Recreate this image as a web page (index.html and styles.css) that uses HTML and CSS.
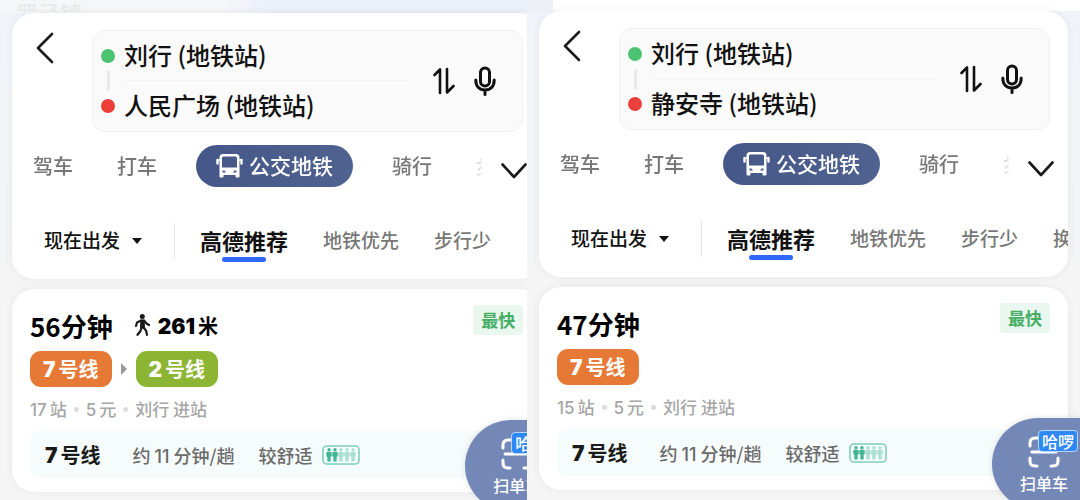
FILE: index.html
```html
<!DOCTYPE html>
<html lang="zh-CN">
<head>
    <meta charset="UTF-8">
    <meta name="viewport" content="width=device-width, initial-scale=1.0">
    <title>公交地铁路线</title>
    <link rel="stylesheet" href="styles.css">
</head>
<body>
    <!-- Iconos compartidos -->
    <svg class="sprite" aria-hidden="true">
        <symbol id="back" viewBox="0 0 18 32">
            <path d="M16 2 2 16 16 30" fill="none" stroke="currentColor" stroke-width="2.6" stroke-linecap="round" stroke-linejoin="round"/>
        </symbol>
        <symbol id="swap" viewBox="0 0 22 28">
            <path d="M1.5 8 7 2.500V26M14 2V25.5L20.5 19" fill="none" stroke="currentColor" stroke-width="2.6" stroke-linecap="round" stroke-linejoin="round"/>
        </symbol>
        <symbol id="mic" viewBox="0 0 22 30">
            <rect x="6.500" y="2" width="9" height="18" rx="4.500" fill="none" stroke="currentColor" stroke-width="3"/>
            <path d="M1.800 14C1.800 20.500 5.500 24 11 24S20.200 20.500 20.200 14M11 24V28.500" fill="none" stroke="currentColor" stroke-width="3" stroke-linecap="round"/>
        </symbol>
        <symbol id="bus" viewBox="0 0 27 25">
            <path fill="currentColor" fill-rule="evenodd" d="M7 1H20Q23.500 1 23.500 4.500V22V23.500Q23.500 24.500 22.500 24.500H20.500Q19.500 24.500 19.500 23.500V22H7.500V23.500Q7.500 24.500 6.500 24.500H4.500Q3.500 24.500 3.500 23.500V4.500Q3.500 1 7 1ZM7.500 3.500Q6 3.500 6 5V14.500H21V5Q21 3.500 19.500 3.500ZM6.500 17.500V19.500H10L8.500 17.500ZM20.500 17.500V19.500H17L18.500 17.500Z"/>
            <path d="M1.500 7V10.500M25.500 7V10.500" stroke="currentColor" stroke-width="2.400" stroke-linecap="round"/>
            <path d="M1.500 7H4M23 7H25.500" stroke="currentColor" stroke-width="1.600"/>
        </symbol>
        <symbol id="down" viewBox="0 0 26 16">
            <path d="M1.500 1.500 13 14 24.500 1.500" fill="none" stroke="currentColor" stroke-width="2.600" stroke-linecap="round" stroke-linejoin="round"/>
        </symbol>
        <symbol id="walk" viewBox="0 0 15 22">
            <circle cx="7.300" cy="2.600" r="2.500" fill="currentColor"/>
            <path d="M6 6H9L9.500 14H5.500Z" fill="currentColor" stroke="currentColor" stroke-linejoin="round"/>
            <path d="M6 6.500 2 8.500 1 12M9 6.500 11.500 9.500 14 11M6.500 13.500 5.500 17 2.500 20.800M8.500 13.500 11 16.500 12 20.800" fill="none" stroke="currentColor" stroke-width="2.200" stroke-linecap="round" stroke-linejoin="round"/>
        </symbol>
        <symbol id="person" viewBox="0 0 6 14">
            <circle cx="3" cy="1.800" r="1.700" fill="currentColor"/>
            <path d="M1.300 3.800H4.700Q5.700 3.800 5.700 5V8.500H4.700V13.500H1.300V8.500H.3V5Q.3 3.800 1.300 3.800Z" fill="currentColor"/>
        </symbol>
        <symbol id="crowd" viewBox="0 0 38 20">
            <rect x="1" y="1" width="36" height="18" rx="4" fill="#f7fffc" stroke="#7fd0b8" stroke-width="1.600"/>
            <g color="#43b593">
                <use href="#person" x="4" y="3" width="6" height="14"/>
                <use href="#person" x="10" y="3" width="6" height="14"/>
            </g>
            <g color="#a9e0cf">
                <use href="#person" x="16" y="3" width="6" height="14"/>
                <use href="#person" x="22" y="3" width="6" height="14"/>
                <use href="#person" x="28" y="3" width="6" height="14"/>
            </g>
        </symbol>
        <symbol id="scan" viewBox="0 0 32 32">
            <path d="M2 10V7Q2 2 7 2H10M22 2H25Q30 2 30 7V10M2 22V25Q2 30 7 30H9M30 22V25Q30 30 25 30H23M4 16H28" fill="none" stroke="currentColor" stroke-width="3" stroke-linecap="round"/>
        </symbol>
    </svg>

    <main class="compare">
        <section class="pane">
            <div class="phone phone-wide">
                <div class="map-strip"><span>罗泾镇</span></div>

                <header class="card search">
                    <div class="search-top">
                        <button class="icon-btn back" aria-label="返回"><svg width="18" height="32"><use href="#back"/></svg></button>
                        <div class="route-box">
                            <div class="dots"><i class="dot start"></i><i class="link"></i><i class="dot end"></i></div>
                            <div class="fields">
                                <input type="text" aria-label="起点" value="刘行 (地铁站)">
                                <input type="text" aria-label="终点" value="人民广场 (地铁站)">
                            </div>
                            <button class="icon-btn" aria-label="交换起终点"><svg width="22" height="28"><use href="#swap"/></svg></button>
                            <button class="icon-btn" aria-label="语音输入"><svg width="22" height="30"><use href="#mic"/></svg></button>
                        </div>
                    </div>

                    <div class="modes">
                        <nav class="mode-list">
                            <button>驾车</button>
                            <button>打车</button>
                            <button class="active"><svg width="27" height="25"><use href="#bus"/></svg>公交地铁</button>
                            <button>骑行</button>
                            <button>步行</button>
                        </nav>
                        <button class="icon-btn more" aria-label="更多"><svg width="26" height="16"><use href="#down"/></svg></button>
                    </div>

                    <div class="filters">
                        <div class="depart">
                            <select aria-label="出发时间"><option>现在出发</option></select>
                            <i class="caret"></i>
                        </div>
                        <button class="active">高德推荐</button>
                        <button>地铁优先</button>
                        <button>步行少</button>
                    </div>
                </header>

                <article class="card route">
                    <div class="route-head">
                        <h2>56分钟</h2>
                        <svg width="15" height="22"><use href="#walk"/></svg>
                        <span class="walk"><b>261</b>米</span>
                        <span class="tag">最快</span>
                    </div>
                    <div class="lines">
                        <span class="line orange"><b>7</b>号线</span>
                        <i class="next"></i>
                        <span class="line green"><b>2</b>号线</span>
                    </div>
                    <p class="info"><span><b>17</b>站</span><i></i><span><b>5</b>元</span><i></i><span>刘行 进站</span></p>
                    <div class="detail">
                        <strong><b>7</b>号线</strong>
                        <span>约<b>11</b>分钟/趟</span>
                        <span>较舒适</span>
                        <svg width="38" height="20"><use href="#crowd"/></svg>
                    </div>
                </article>

                <button class="scan">
                    <svg width="32" height="32"><use href="#scan"/></svg>
                    <span class="badge">哈啰</span>
                    扫单车
                </button>
            </div>
        </section>

        <section class="pane">
            <div class="phone">
                <div class="map-strip blank"></div>

                <header class="card search">
                    <div class="search-top">
                        <button class="icon-btn back" aria-label="返回"><svg width="18" height="32"><use href="#back"/></svg></button>
                        <div class="route-box">
                            <div class="dots"><i class="dot start"></i><i class="link"></i><i class="dot end"></i></div>
                            <div class="fields">
                                <input type="text" aria-label="起点" value="刘行 (地铁站)">
                                <input type="text" aria-label="终点" value="静安寺 (地铁站)">
                            </div>
                            <button class="icon-btn" aria-label="交换起终点"><svg width="22" height="28"><use href="#swap"/></svg></button>
                            <button class="icon-btn" aria-label="语音输入"><svg width="22" height="30"><use href="#mic"/></svg></button>
                        </div>
                    </div>

                    <div class="modes">
                        <nav class="mode-list">
                            <button>驾车</button>
                            <button>打车</button>
                            <button class="active"><svg width="27" height="25"><use href="#bus"/></svg>公交地铁</button>
                            <button>骑行</button>
                            <button>步行</button>
                        </nav>
                        <button class="icon-btn more" aria-label="更多"><svg width="26" height="16"><use href="#down"/></svg></button>
                    </div>

                    <div class="filters">
                        <div class="depart">
                            <select aria-label="出发时间"><option>现在出发</option></select>
                            <i class="caret"></i>
                        </div>
                        <button class="active">高德推荐</button>
                        <button>地铁优先</button>
                        <button>步行少</button>
                        <button>换乘少</button>
                    </div>
                </header>

                <article class="card route">
                    <div class="route-head">
                        <h2>47分钟</h2>
                        <span class="tag">最快</span>
                    </div>
                    <div class="lines">
                        <span class="line orange"><b>7</b>号线</span>
                    </div>
                    <p class="info"><span><b>15</b>站</span><i></i><span><b>5</b>元</span><i></i><span>刘行 进站</span></p>
                    <div class="detail">
                        <strong><b>7</b>号线</strong>
                        <span>约<b>11</b>分钟/趟</span>
                        <span>较舒适</span>
                        <svg width="38" height="20"><use href="#crowd"/></svg>
                    </div>
                </article>

                <button class="scan">
                    <svg width="32" height="32"><use href="#scan"/></svg>
                    <span class="badge">哈啰</span>
                    扫单车
                </button>
            </div>
        </section>
    </main>
</body>
</html>
```
FILE: styles.css
```css
* {
    box-sizing: border-box;
}

body {
    font-family: 'Noto Sans CJK SC', sans-serif;
    margin: 0;
    background-color: #f4f5f6;
    color: #1a1a1a;
}

button, input, select {
    font: inherit;
    color: inherit;
    background: none;
    border: none;
    padding: 0;
    margin: 0;
}

button {
    cursor: pointer;
    white-space: nowrap;
}

svg {
    display: block;
    flex: none;
}

.sprite {
    position: absolute;
    width: 0;
    height: 0;
}

.compare {
    display: grid;
    grid-template-columns: 527fr 553fr;
    height: 100vh;
    overflow: hidden;
}

.pane {
    overflow: hidden;
    background: linear-gradient(#f0f3f9, #f5f5f5 60%);
}

.phone {
    position: relative;
    padding: 0 12px;
}

/* la primera pantalla queda cortada por la segunda */
.phone-wide {
    width: 105%;
}

.map-strip {
    height: 13px;
    margin: 0 -12px;
    padding-left: 16px;
    overflow: hidden;
    font-size: 22px;
    line-height: 24px;
    color: #e6e8ea;
    background: linear-gradient(90deg, #f5f6f8 40%, #eaeffa 50%);
}

.map-strip.blank {
    height: 11px;
    background: linear-gradient(90deg, #eef0f7 26px, #fff 26px);
}

.card {
    background-color: #fff;
    border-radius: 22px;
    overflow: hidden;
    box-shadow: 0 0 8px rgba(0,0,0,0.06);
}

.search {
    padding: 17px 0 20px;
    margin-bottom: 10px;
}

.search-top {
    display: flex;
    align-items: flex-start;
    padding-right: 18px;
}

.icon-btn {
    display: flex;
    flex: none;
}

.back {
    width: 80px;
    padding: 2px 0 0 24px;
}

.route-box {
    flex: 1;
    display: flex;
    align-items: center;
    gap: 19px;
    padding: 0 26px 0 8px;
    background-color: #fafafa;
    border: 1px solid #f1f1f1;
    border-radius: 12px;
    color: #111;
}

.dots {
    display: flex;
    flex-direction: column;
    align-items: center;
    gap: 8px;
    margin-right: -10px;
}

.dot {
    width: 14px;
    height: 14px;
    border-radius: 50%;
}

.start {
    background-color: #4cc272;
}

.end {
    background-color: #ec3f39;
}

.link {
    width: 3px;
    height: 20px;
    background-color: #e9e9e9;
}

.fields {
    flex: 1;
    min-width: 0;
    margin-right: 5px;
}

.fields input {
    display: block;
    width: 100%;
    height: 50px;
    padding-bottom: 3px;
    font-size: 24px;
    font-weight: 500;
}

.fields input:first-child {
    border-bottom: 1px solid #f3f3f3;
}

.modes {
    display: flex;
    align-items: center;
    gap: 18px;
    margin-top: 13px;
    padding: 0 14px 0 21px;
}

.mode-list {
    flex: 1;
    min-width: 0;
    display: flex;
    align-items: center;
    gap: 44px;
    overflow: hidden;
    mask-image: linear-gradient(90deg, #000 calc(100% - 16px), transparent);
}

.mode-list button {
    flex: none;
    padding-bottom: 2px;
    font-size: 20px;
    font-weight: 500;
    color: #777;
}

.mode-list .active {
    display: flex;
    align-items: center;
    gap: 6px;
    height: 42px;
    margin: 0 -5px;
    padding: 0 20px 2px;
    border-radius: 21px;
    font-size: 21px;
    color: #fff;
    background: linear-gradient(90deg, #445788, #50628f);
}

.more {
    padding-top: 10px;
}

.filters {
    display: flex;
    align-items: center;
    gap: 35px;
    height: 36px;
    margin-top: 36px;
    padding-left: 32px;
}

.filters button {
    position: relative;
    flex: none;
    padding-bottom: 3px;
    font-size: 19px;
    font-weight: 500;
    color: #777;
}

.filters .active {
    font-size: 22px;
    font-weight: 700;
    color: #111;
}

.filters .active::after {
    content: "";
    position: absolute;
    left: 25%;
    right: 25%;
    bottom: -3px;
    height: 5px;
    border-radius: 3px;
    background-color: #2f67f6;
}

.depart {
    flex: none;
    display: flex;
    align-items: center;
    gap: 11px;
    height: 100%;
    padding-right: 32px;
    margin-right: -10px;
    border-right: 1px solid #e4e4e4;
}

.depart select {
    appearance: none;
    padding-bottom: 3px;
    font-size: 19px;
    font-weight: 500;
    color: #111;
}

.caret {
    border: 5px solid transparent;
    border-top: 6px solid #111;
    border-bottom: 0;
}

.route {
    padding: 16px 18px 14px;
}

.route-head {
    display: flex;
    align-items: center;
    height: 40px;
}

.route-head h2 {
    margin: 0 22px 0 0;
    font-size: 26px;
    font-weight: 700;
    color: #000;
}

.route b {
    font-family: 'Inter', 'Noto Sans CJK SC', sans-serif;
    font-weight: inherit;
    line-height: 1;
    margin-right: 3px;
}

.walk {
    margin-left: 8px;
    font-size: 20px;
    font-weight: 700;
    color: #000;
}

.walk b, .line b, .detail strong b {
    font-size: 21px;
    font-weight: 900;
}

.tag {
    align-self: flex-start;
    margin-left: auto;
    padding: 0 8px;
    border-radius: 4px;
    font-size: 17px;
    font-weight: 700;
    line-height: 30px;
    color: #46ae65;
    background-color: #eaf6f0;
}

.lines {
    display: flex;
    align-items: center;
    gap: 9px;
    margin-top: 6px;
}

.line {
    display: flex;
    align-items: center;
    height: 36px;
    padding: 0 13px;
    border-radius: 11px;
    font-size: 20px;
    font-weight: 700;
    line-height: 36px;
    color: #fff;
}

.orange {
    background-color: #e77937;
}

.green {
    background-color: #8bb532;
}

.next {
    border: 6px solid transparent;
    border-left: 6px solid #999;
    border-right: 0;
}

.info {
    display: flex;
    align-items: center;
    gap: 7px;
    margin: 9px 0;
    font-size: 17px;
    font-weight: 500;
    line-height: 26px;
    color: #a6a6a6;
}

.info i {
    width: 5px;
    height: 5px;
    border-radius: 50%;
    background-color: #dcdcdc;
}

.detail {
    display: flex;
    align-items: center;
    height: 47px;
    padding-left: 15px;
    border-radius: 10px;
    font-size: 18px;
    font-weight: 500;
    color: #6a6a6a;
    background-color: #f6fbfb;
}

.detail strong {
    margin-right: 32px;
    font-size: 20px;
    font-weight: 700;
    color: #1a1a1a;
}

.detail span {
    margin-right: 24px;
}

.detail span + span {
    margin-right: 10px;
}

.detail span b {
    margin: 0 4px;
}

/* botón flotante sobre la tarjeta */
.scan {
    position: absolute;
    right: 0;
    bottom: -20px;
    width: 88px;
    height: 92px;
    padding: 18px 0 0 16px;
    display: flex;
    flex-direction: column;
    align-items: center;
    gap: 3px;
    border-radius: 46px 0 0 46px;
    font-size: 16px;
    font-weight: 500;
    line-height: 24px;
    color: #fff;
    background-color: #7488b8;
    box-shadow: 0 0 6px rgba(0,0,0,0.12);
}

.badge {
    position: absolute;
    top: 12px;
    right: 2px;
    padding: 0 3px;
    border: 1px solid #b9d8ff;
    border-radius: 4px;
    font-size: 16px;
    line-height: 20px;
    background-color: #2f88f8;
}
```
